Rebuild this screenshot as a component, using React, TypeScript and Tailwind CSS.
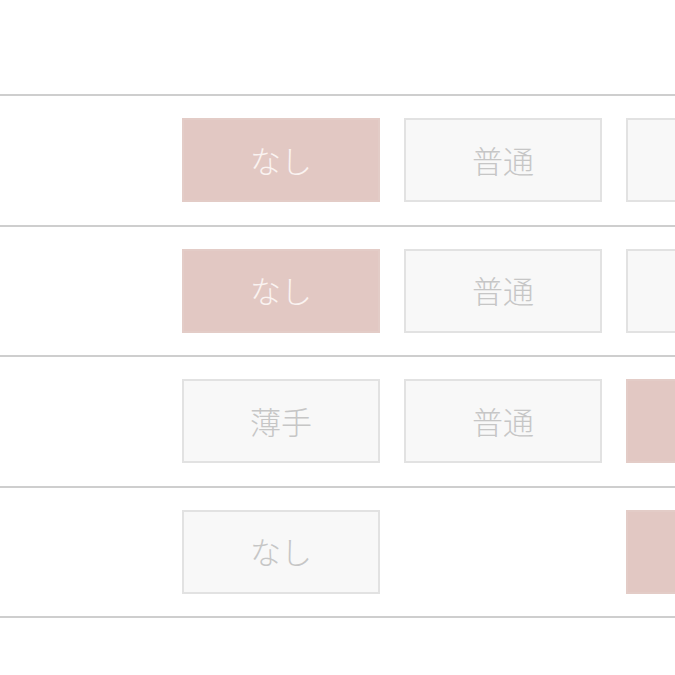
const rows: { label: string; on: boolean }[][] = [
  [
    { label: "なし", on: true },
    { label: "普通", on: false },
    { label: "", on: false },
  ],
  [
    { label: "なし", on: true },
    { label: "普通", on: false },
    { label: "", on: false },
  ],
  [
    { label: "薄手", on: false },
    { label: "普通", on: false },
    { label: "", on: true },
  ],
  [
    { label: "なし", on: false },
    { label: "-", on: false },
    { label: "", on: true },
  ],
];

function Choice({ label, on }: { label: string; on: boolean }) {
  if (label === "-") return <div className="w-[198px] shrink-0" />;
  return (
    <div
      className={
        on
          ? "flex h-[84px] w-[198px] shrink-0 items-center justify-center border-2 border-[#e3ccc7] bg-[#e2c8c3] text-[31px] font-light text-[#faf3f1]"
          : "flex h-[84px] w-[198px] shrink-0 items-center justify-center border-2 border-[#e2e2e2] bg-[#f8f8f8] text-[31px] font-light text-[#c6c6c6]"
      }
    >
      {label}
    </div>
  );
}

export default function App() {
  return (
    <div
      className="h-[675px] w-[675px] overflow-hidden bg-white pt-[94px]"
      style={{ fontFamily: '"Noto Sans CJK JP", "Noto Sans", sans-serif' }}
    >
      {rows.map((row, i) => (
        <div
          key={i}
          className={
            i === rows.length - 1
              ? "flex h-[132.5px] gap-[24px] border-y-2 border-[#cecece] pl-[182px] pt-[22px]"
              : "flex h-[130.5px] gap-[24px] border-t-2 border-[#cecece] pl-[182px] pt-[22px]"
          }
        >
          {row.map((c, j) => (
            <Choice key={j} label={c.label} on={c.on} />
          ))}
        </div>
      ))}
    </div>
  );
}
